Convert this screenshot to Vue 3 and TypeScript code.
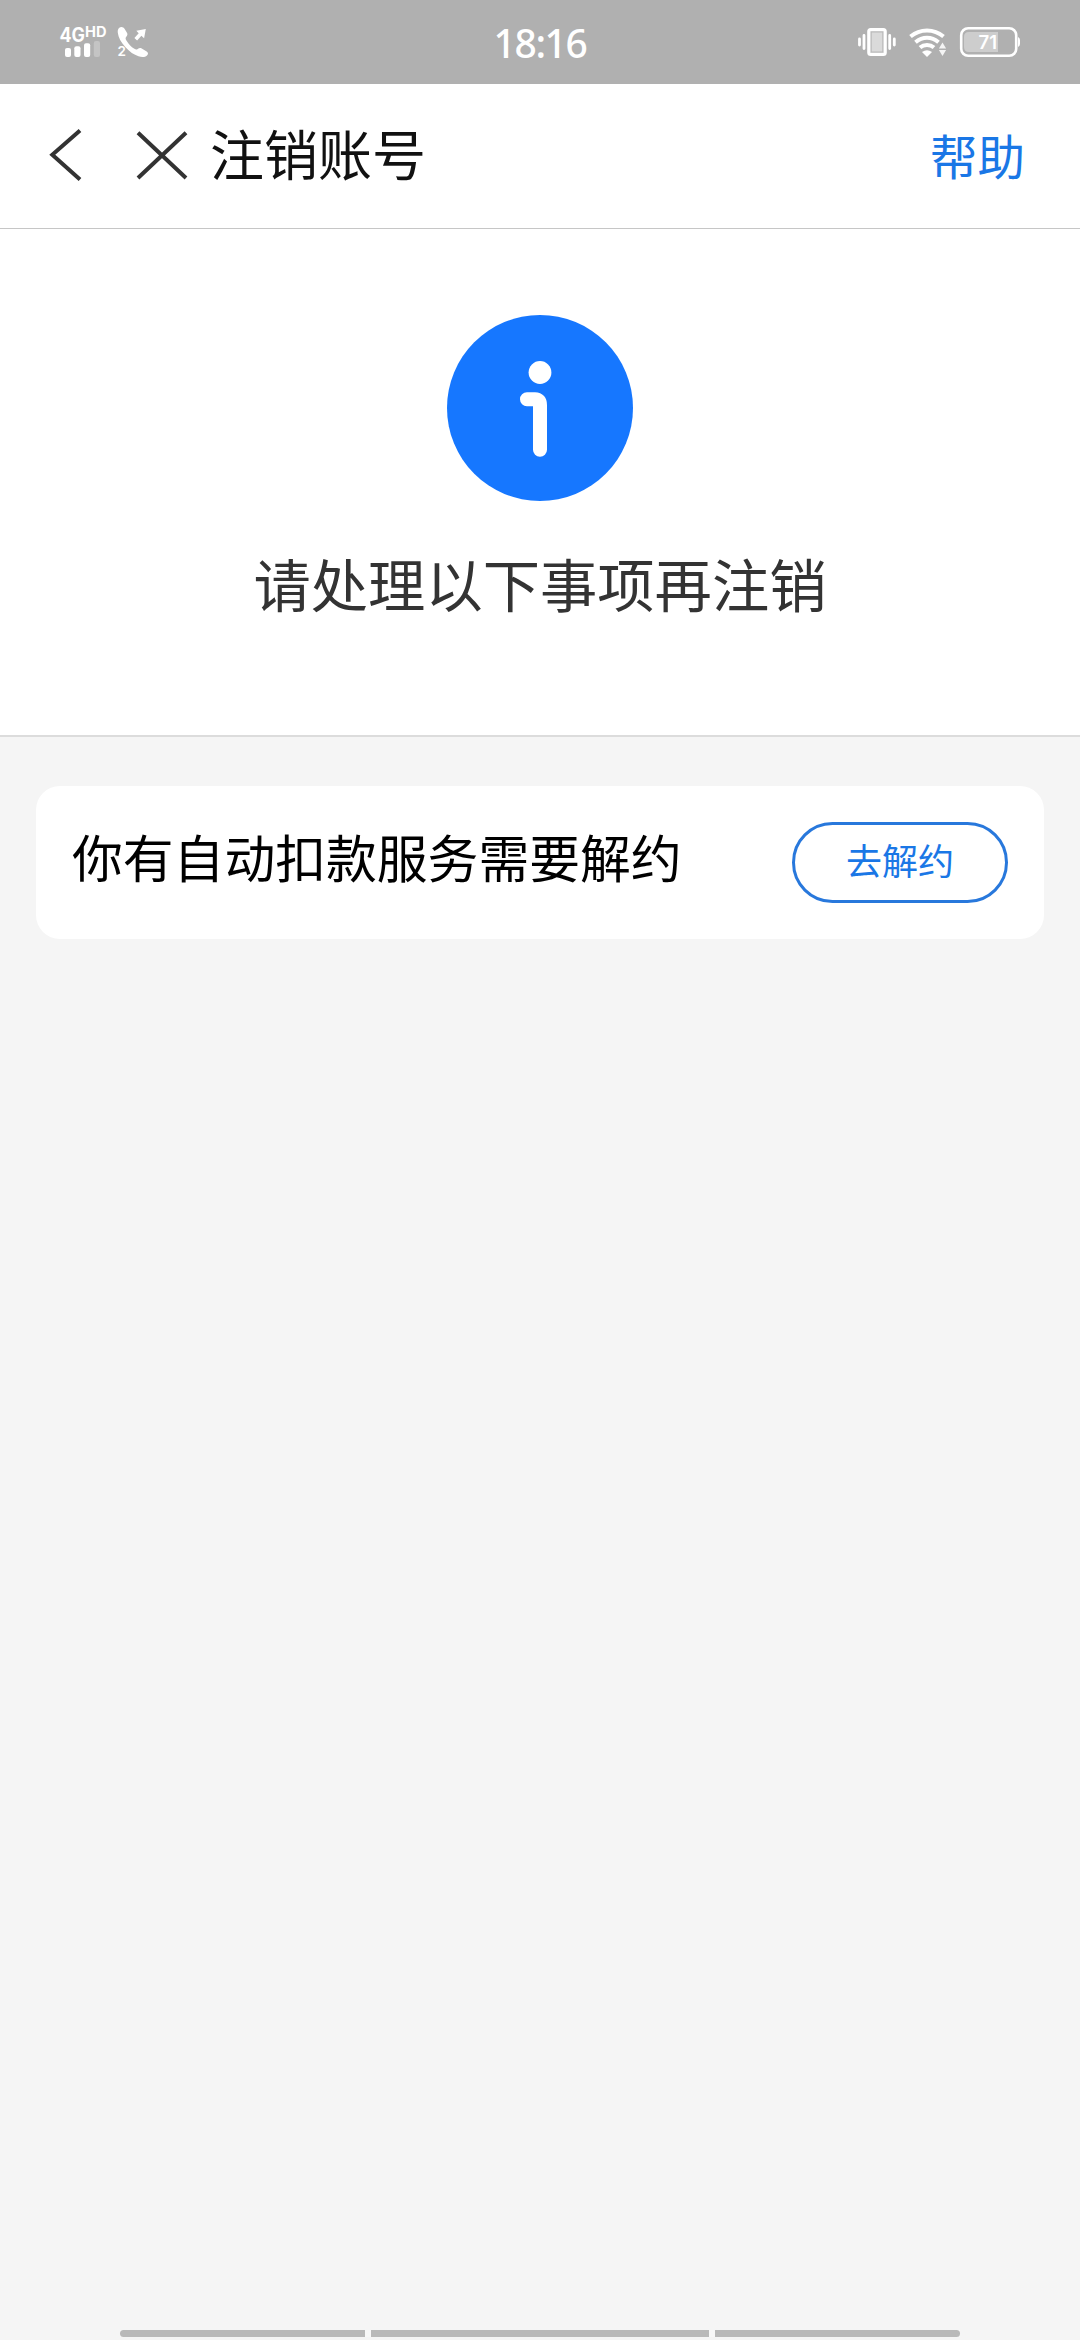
<script setup lang="ts">
interface Task {
  id: string
  title: string
  action: string
}

const time = '18:16'
const battery = 71
const tasks: Task[] = [
  { id: 'autopay', title: '你有自动扣款服务需要解约', action: '去解约' },
]
</script>

<template>
  <div class="screen">
    <div class="status">
      <svg class="status-left" viewBox="50 0 110 84" aria-hidden="true">
        <g fill="#fff" font-family="Inter, 'Noto Sans', sans-serif" font-weight="700">
          <text x="59.5" y="41.5" font-size="19.5" textLength="25.5" lengthAdjust="spacingAndGlyphs">4G</text>
          <text x="85" y="37" font-size="14" textLength="21.5" lengthAdjust="spacingAndGlyphs">HD</text>
          <text x="117.5" y="56" font-size="13.5" font-weight="600">2</text>
        </g>
        <g fill="#fff">
          <rect x="65" y="48" width="6" height="9" rx="2" />
          <rect x="74.3" y="46.3" width="6.2" height="10.7" rx="2" />
          <rect x="84" y="43.3" width="6.2" height="13.7" rx="2" />
          <rect x="93.8" y="41" width="6.2" height="16" rx="2" opacity=".25" />
          <path d="M119 28c2-1.800 4.400-1.200 5.500.8l2.600 4.200c.7 1.400.2 2.700-1 4-.8 1-.6 2 .3 3.400 2.200 3.500 4.600 6.200 8 8.400 1.400 1 2.300 1 3.300.2 1.300-1 2.700-1.300 4-.5l5 3.100c1.800 1.200 1.600 2.700.3 4-2.200 1.900-5.400 1.800-8.500.7-4.500-1.500-9-4.500-13-9-4.500-5-7.200-9.800-7.700-14.500-.2-2 .1-3.600 1.200-4.800z" />
          <path d="M145.800 29l-1.700 9.300-2.700-2.600-4.300 4.700-2.700-2.500 4.300-4.700-2.400-2.400z" />
        </g>
      </svg>
      <span class="clock">{{ time }}</span>
      <svg class="status-right" viewBox="850 0 180 84" aria-hidden="true">
        <rect x="870" y="31" width="14" height="22" fill="#dadada" />
        <rect x="871.200" y="32" width="11.600" height="20" fill="none" stroke="#b8b8b8" stroke-width="1" />
        <rect x="868.700" y="29.500" width="16.600" height="25" rx="2" fill="none" stroke="#fff" stroke-width="3" />
        <g stroke="#fff" stroke-width="2.800" stroke-linecap="round">
          <path d="M859.500 39v6M864 35.500v13M889.700 35.500v13M894.300 39v6" />
        </g>
        <g fill="none" stroke="#fff" stroke-width="4">
          <path d="M910.500 36.500C920 28.400 934 28.400 943.500 36.500" />
          <path d="M915.500 42.300C922.500 36.300 931.500 36.300 938.500 42.300" />
          <path d="M920 47.500C924 44 930 44 934 47.500" />
        </g>
        <path d="M922 52Q927 48.500 932 52L927 57z" fill="#fff" />
        <path d="M942.500 42.500l3.600 6h-7.200zM942.500 56l-3.600-6h7.200z" fill="#f4f4f4" />
        <path d="M969 32h29v20h-29q-5 0-5-5v-10q0-5 5-5z" fill="#cdcdcd" />
        <rect x="961.200" y="28.200" width="55" height="27.600" rx="7" fill="none" stroke="#fff" stroke-width="2.600" />
        <path d="M1018 37q2 1 2 3v4q0 2-2 3z" fill="#fff" />
        <text x="978.500" y="49" fill="#fff" font-family="Inter, sans-serif" font-size="19" font-weight="600" textLength="18.500" lengthAdjust="spacingAndGlyphs">{{ battery }}</text>
      </svg>
    </div>

    <header class="nav">
      <svg class="nav-icons" viewBox="45 120 150 70" aria-hidden="true">
        <g fill="none" stroke="#333" stroke-width="4">
          <path d="M80 130.500L52.300 154.700L80 179.500" />
          <path d="M138 132.700L186 178M186 132.700L138 178" />
        </g>
      </svg>
      <h1 class="title">注销账号</h1>
      <a class="help">帮助</a>
    </header>

    <section class="hero">
      <svg class="info" viewBox="0 0 186 186" aria-hidden="true">
        <circle cx="93" cy="93" r="93" fill="#1677ff" />
        <circle cx="93" cy="57.500" r="11.400" fill="#fff" />
        <path d="M80 84.200H88Q93 84.200 93 90V134.700" fill="none" stroke="#fff" stroke-width="14" stroke-linecap="round" />
      </svg>
      <p class="hero-text">请处理以下事项再注销</p>
    </section>

    <main class="list">
      <div v-for="task in tasks" :key="task.id" class="card">
        <span class="card-text">{{ task.title }}</span>
        <button class="action" type="button">{{ task.action }}</button>
      </div>
    </main>

    <div class="gesture">
      <i class="bar side first"></i>
      <i class="bar middle"></i>
      <i class="bar side last"></i>
    </div>
  </div>
</template>

<style>
body {
  margin: 0;
  background: #f5f5f5;
}
</style>

<style scoped>
.screen {
  box-sizing: border-box;
  width: 1080px;
  height: 2340px;
  display: flex;
  flex-direction: column;
  background: #f5f5f5;
  font-family: "Noto Sans CJK SC", sans-serif;
  overflow: hidden;
}
.status {
  flex: none;
  height: 84px;
  box-sizing: border-box;
  padding: 0 50px;
  display: grid;
  grid-template-columns: 1fr auto 1fr;
  align-items: center;
  background: #b0b0b0;
}
.status-left {
  width: 110px;
  height: 84px;
}
.status-right {
  width: 180px;
  height: 84px;
  justify-self: end;
}
.clock {
  color: #fff;
  font: 500 39px/84px "Noto Sans", sans-serif;
  letter-spacing: -1.4px;
  padding-top: 1px;
  height: 84px;
  box-sizing: border-box;
}
.nav {
  flex: none;
  box-sizing: border-box;
  height: 145px;
  padding: 0 55px 0 45px;
  display: flex;
  align-items: center;
  background: #fff;
  border-bottom: 1px solid #c6c6c6;
}
.nav-icons {
  width: 150px;
  height: 70px;
  margin: 0 15px 2px 0;
}
.title {
  margin: 0;
  padding-bottom: 7px;
  font-size: 54px;
  line-height: 80px;
  font-weight: 400;
  color: #111;
}
.help {
  margin-left: auto;
  font-size: 47.5px;
  line-height: 70px;
  padding-bottom: 2px;
  color: #1a77e6;
}
.hero {
  flex: none;
  box-sizing: border-box;
  height: 508px;
  padding-top: 86px;
  display: flex;
  flex-direction: column;
  align-items: center;
  background: #fff;
  border-bottom: 2px solid #dcdcdc;
}
.info {
  width: 186px;
  height: 186px;
}
.hero-text {
  margin: 40px 0 0;
  font-size: 57.3px;
  line-height: 84px;
  color: #333;
}
.list {
  flex: 1;
  padding: 49px 36px 0;
}
.card {
  box-sizing: border-box;
  height: 153px;
  padding: 0 36px;
  display: flex;
  align-items: center;
  justify-content: space-between;
  background: #fff;
  border-radius: 24px;
}
.card-text {
  font-size: 50.8px;
  line-height: 76px;
  padding-bottom: 13px;
  color: #000;
}
.action {
  box-sizing: border-box;
  width: 216px;
  height: 81px;
  padding: 0 0 7px;
  border: 3px solid #2878dc;
  border-radius: 41px;
  background: #fff;
  color: #1a77e6;
  font: 400 36px/60px "Noto Sans CJK SC", sans-serif;
}
.gesture {
  flex: none;
  height: 7px;
  margin: 0 120px 3px;
  display: flex;
  justify-content: space-between;
  background: #f8f8f8;
}
.bar {
  background: #b9b9b9;
}
.side {
  width: 245px;
}
.middle {
  width: 338px;
}
.first {
  border-radius: 4px 0 0 4px;
}
.last {
  border-radius: 0 4px 4px 0;
}
</style>
